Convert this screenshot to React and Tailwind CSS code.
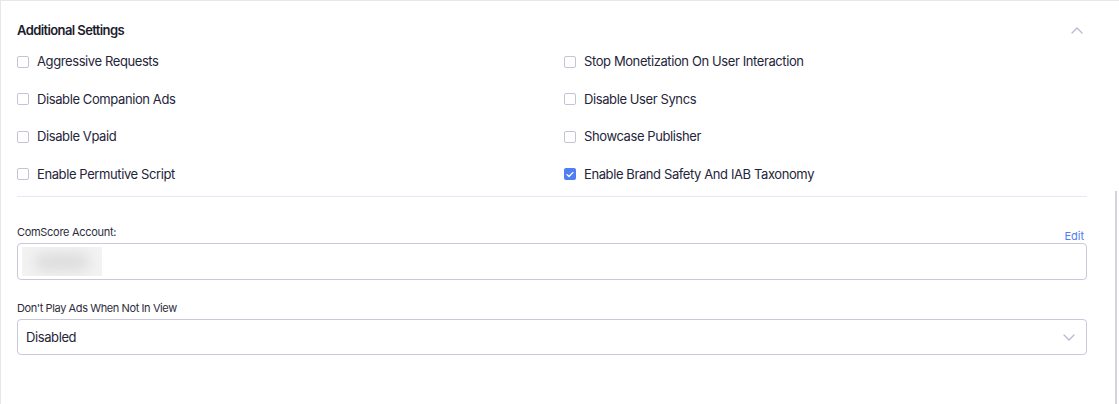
import React from 'react';

const leftOptions = [
    { label: 'Aggressive Requests', checked: false },
    { label: 'Disable Companion Ads', checked: false },
    { label: 'Disable Vpaid', checked: false },
    { label: 'Enable Permutive Script', checked: false },
];

const rightOptions = [
    { label: 'Stop Monetization On User Interaction', checked: false },
    { label: 'Disable User Syncs', checked: false },
    { label: 'Showcase Publisher', checked: false },
    { label: 'Enable Brand Safety And IAB Taxonomy', checked: true },
];

const Chevron = ({ up }) => (
    <svg width="12" height="7" viewBox="0 0 12 7" fill="none">
        <polyline
            points={up ? '1,6 6,1 11,6' : '1,1 6,6 11,1'}
            stroke="#b9b6cf"
            strokeWidth="1.2"
            strokeLinecap="round"
            strokeLinejoin="round"
        />
    </svg>
);

const Checkbox = ({ checked }) =>
    checked ? (
        <span className="w-[12px] h-[12px] rounded-[2px] bg-[#4f7ef5] flex items-center justify-center shrink-0">
            <svg width="8" height="7" viewBox="0 0 8 7" fill="none">
                <polyline points="1,3.6 3,5.5 7,1.4" stroke="#fff" strokeWidth="1.3" strokeLinecap="round" strokeLinejoin="round" />
            </svg>
        </span>
    ) : (
        <span className="w-[12px] h-[12px] rounded-[2px] border border-[#c6c3d9] bg-white shrink-0" />
    );

const OptionRow = ({ label, checked }) => (
    <label className="flex items-center h-[37.5px] gap-[8px] text-[13px] tracking-[-0.4px] text-[#25253a]">
        <Checkbox checked={checked} />
        <span>{label}</span>
    </label>
);

const App = () => {
    return (
        <div
            className="relative w-full h-[404px] bg-white border-t border-l border-[#e6e6ec] overflow-hidden"
            style={{ fontFamily: 'Inter, "Liberation Sans", sans-serif' }}
        >
            <div className="pl-[16px] pr-[32px]">
                <div className="flex items-center justify-between pt-[20px] mb-[4px]">
                    <h2 className="text-[13px] leading-[18px] font-semibold text-[#1c1c2e] tracking-[-0.6px]">Additional Settings</h2>
                    <span className="mr-[4px]">
                        <Chevron up />
                    </span>
                </div>

                <div className="grid grid-cols-2 gap-x-[24px]">
                    <div className="flex flex-col">
                        {leftOptions.map((o) => (
                            <OptionRow key={o.label} {...o} />
                        ))}
                    </div>
                    <div className="flex flex-col">
                        {rightOptions.map((o) => (
                            <OptionRow key={o.label} {...o} />
                        ))}
                    </div>
                </div>

                <div className="mt-[3px] border-t border-[#e4e8f6]" />

                <div className="flex items-end justify-between mt-[28px]">
                    <span className="text-[11px] leading-[14px] tracking-[-0.3px] text-[#2d2d3d] mb-[4px]">ComScore Account:</span>
                    <button className="text-[11px] leading-[14px] text-[#4c7df6] mr-[3px]">Edit</button>
                </div>
                <div className="h-[37px] rounded-[4px] border border-[#cbc8dc] flex items-center pl-[4px]">
                    <div className="w-[80px] h-[29px] bg-[#f3f3f3] flex items-center justify-center overflow-hidden">
                        <div className="w-[56px] h-[18px] rounded-full bg-[#dcdcdc] blur-[7px]" />
                    </div>
                </div>

                <div className="mt-[21px] mb-[4px] text-[11px] leading-[14px] tracking-[-0.4px] text-[#2d2d3d]">Don't Play Ads When Not In View</div>
                <div className="h-[36px] rounded-[4px] border border-[#cbc8dc] flex items-center justify-between pl-[8px] pr-[11px]">
                    <span className="text-[13px] tracking-[-0.4px] text-[#25253a] pt-[1px]">Disabled</span>
                    <Chevron />
                </div>
            </div>

            {/* scrollbar edge */}
            <div className="absolute right-[2px] top-[190px] bottom-0 w-[2px] bg-[#d5d3e1]" />
        </div>
    );
};

export default App;
